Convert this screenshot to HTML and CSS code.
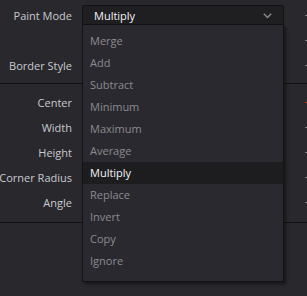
FILE: index.html
```html
<!DOCTYPE html>
<html>
<head>
<meta charset="utf-8">
<link rel="stylesheet" href="styles.css">
</head>
<body>
<div class="panel">
  <div class="group first">
    <div class="row"><span class="label">Paint Mode</span><span class="tick"></span></div>
    <div class="row"><span class="label"></span><span class="tick"></span></div>
    <div class="row"><span class="label">Border Style</span><span class="tick"></span></div>
  </div>
  <div class="divider"></div>
  <div class="group second">
    <div class="row"><span class="label">Center</span><span class="tick red"></span></div>
    <div class="row"><span class="label">Width</span><span class="tick"></span></div>
    <div class="row"><span class="label">Height</span><span class="tick"></span></div>
    <div class="row"><span class="label">Corner Radius</span><span class="tick"></span></div>
    <div class="row"><span class="label">Angle</span><span class="tick"></span></div>
  </div>
  <div class="divider"></div>

  <div class="combo">
    <div class="combo-box">
      <span class="combo-value">Multiply</span>
      <svg class="chev" width="9" height="6" viewBox="0 0 9 6"><path d="M0.8 0.8 L4.5 4.6 L8.2 0.8" fill="none" stroke="#8a8a8e" stroke-width="1.4"/></svg>
    </div>
    <ul class="menu">
      <li>Merge</li>
      <li>Add</li>
      <li>Subtract</li>
      <li>Minimum</li>
      <li>Maximum</li>
      <li>Average</li>
      <li class="active">Multiply</li>
      <li>Replace</li>
      <li>Invert</li>
      <li>Copy</li>
      <li>Ignore</li>
    </ul>
  </div>
</div>
</body>
</html>
```
FILE: styles.css
```css
html, body {
  margin: 0;
  padding: 0;
  background: #28282d;
}
body {
  width: 307px;
  height: 296px;
  overflow: hidden;
  font-family: "Open Sans", "Noto Sans", sans-serif;
  font-size: 11px;
}
.panel {
  position: relative;
  width: 307px;
  height: 296px;
}
.group.first {
  padding-top: 3px;
  padding-bottom: 5px;
}
.group.second {
  padding-top: 6px;
  padding-bottom: 7px;
}
.row {
  height: 25px;
  display: flex;
  align-items: center;
  justify-content: space-between;
}
.label {
  width: 72px;
  color: #cacacd;
  white-space: nowrap;
  line-height: 25px;
  display: flex;
  justify-content: flex-end;
}
.tick {
  width: 2px;
  height: 1px;
  background: #7a7a80;
}
.tick.red {
  background: #b03a2a;
}
.divider {
  height: 1px;
  background: #111113;
}
.combo {
  position: absolute;
  left: 82px;
  top: 5px;
  width: 202px;
}
.combo-box {
  height: 18px;
  background: #1f1f22;
  border: 1px solid #121214;
  border-radius: 2px 2px 0 0;
  display: flex;
  align-items: center;
  justify-content: space-between;
  padding: 0 11px 0 11px;
}
.combo-value {
  color: #f2f2f4;
}
.chev {
  display: block;
  margin-top: 1px;
}
.menu {
  list-style: none;
  margin: 0;
  padding: 5px 0 9px 0;
  background: #2a292f;
  border: 1px solid #131315;
  border-top: none;
  box-shadow: 2px 2px 3px rgba(0,0,0,0.45);
}
.menu li {
  height: 22px;
  line-height: 22px;
  padding-left: 7px;
  color: #8b8b90;
}
.menu li.active {
  background: #1d1d20;
  color: #f4f4f6;
}
```
